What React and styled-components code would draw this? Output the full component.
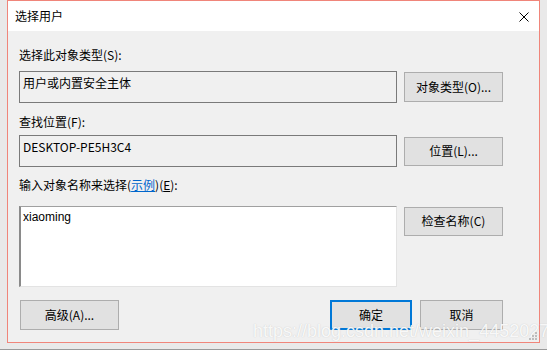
import React from "react";
import styled, { createGlobalStyle } from "styled-components";

const GlobalStyle = createGlobalStyle`
  html, body {
    margin: 0;
    padding: 0;
    background: #e9e9e9;
    overflow: hidden;
  }
  body {
    font-family: "Noto Sans CJK SC", "Noto Sans", sans-serif;
    font-size: 12px;
    color: #000;
  }
`;

export default function App() {
  return (
    <>
      <GlobalStyle />
      <Desktop>
        <Dialog>
          <TitleBar>
            <Title>选择用户</Title>
            <CloseButton aria-label="close">
              <svg width="10" height="10" viewBox="0 0 10 10">
                <path d="M0.5 0.5 L9.5 9.5 M9.5 0.5 L0.5 9.5" stroke="#000" strokeWidth="1" />
              </svg>
            </CloseButton>
          </TitleBar>
          <Body>
            <Label $top={16} $bottom={8}>选择此对象类型(S):</Label>
            <Row>
              <ReadOnlyBox>用户或内置安全主体</ReadOnlyBox>
              <Button $top={1}>对象类型(O)...</Button>
            </Row>

            <Label $top={11} $bottom={5}>查找位置(F):</Label>
            <Row>
              <ReadOnlyBox>DESKTOP-PE5H3C4</ReadOnlyBox>
              <Button $top={2} $height={29}>位置(L)...</Button>
            </Row>

            <Label $top={10} $bottom={13}>
              输入对象名称来选择(<Link>示例</Link>)(<u>E</u>):
            </Label>
            <Row>
              <NameBox>xiaoming</NameBox>
              <Button $top={1} $height={29}>检查名称(C)</Button>
            </Row>

            <Footer>
              <Button $width={99}>高级(A)...</Button>
              <FooterRight>
                <Button $width={82} $primary>确定</Button>
                <Button $width={83}>取消</Button>
              </FooterRight>
            </Footer>
          </Body>
          <Watermark>https://blog.csdn.net/weixin_44520274</Watermark>
          <Grip>
            <svg width="8" height="8" viewBox="0 0 8 8">
              <rect x="6" y="0" width="2" height="2" fill="#bdbdbd" />
              <rect x="3" y="3" width="2" height="2" fill="#bdbdbd" />
              <rect x="6" y="3" width="2" height="2" fill="#bdbdbd" />
              <rect x="0" y="6" width="2" height="2" fill="#bdbdbd" />
              <rect x="3" y="6" width="2" height="2" fill="#bdbdbd" />
              <rect x="6" y="6" width="2" height="2" fill="#bdbdbd" />
            </svg>
          </Grip>
        </Dialog>
      </Desktop>
    </>
  );
}

const Desktop = styled.div`
  width: 547px;
  height: 350px;
  padding-left: 7px;
  box-sizing: border-box;
  background: #e9e9e9;
  border-bottom: 1px solid #9a9a9a;
`;

const Dialog = styled.div`
  position: relative;
  width: 533px;
  height: 343px;
  box-sizing: border-box;
  border: 1px solid #f0857a;
  background: #f0f0f0;
  display: flex;
  flex-direction: column;
`;

const TitleBar = styled.div`
  height: 30px;
  background: #fff;
  display: flex;
  align-items: center;
  justify-content: space-between;
  padding: 0 10px 0 7px;
`;

const Title = styled.div`
  font-size: 12px;
  line-height: 16px;
`;

const CloseButton = styled.div`
  width: 10px;
  height: 10px;
  display: flex;
  margin-top: 1px;
  svg {
    display: block;
  }
`;

const Body = styled.div`
  flex: 1;
  display: flex;
  flex-direction: column;
  padding: 0 36px 0 11px;
`;

const Label = styled.div`
  line-height: 16px;
  margin-top: ${(p) => p.$top}px;
  margin-bottom: ${(p) => p.$bottom}px;
  u {
    text-decoration-thickness: 1px;
  }
`;

const Link = styled.span`
  color: #0066cc;
  text-decoration: underline;
`;

const Row = styled.div`
  display: flex;
  align-items: flex-start;
  gap: 7px;
`;

const ReadOnlyBox = styled.div`
  width: 378px;
  height: 32px;
  box-sizing: border-box;
  border: 1px solid #7a7a7a;
  background: #f0f0f0;
  padding: 3px 3px;
  line-height: 16px;
`;

const NameBox = styled.div`
  width: 378px;
  height: 81px;
  box-sizing: border-box;
  background: #fff;
  border-top: 1px solid #a0a0a0;
  border-left: 2px solid #8a8a8a;
  border-right: 1px solid #e3e3e3;
  border-bottom: 1px solid #e3e3e3;
  padding: 2px 2px;
  font-family: "Liberation Sans", Arial, sans-serif;
  font-size: 12px;
  line-height: 16px;
`;

const Button = styled.div`
  width: ${(p) => p.$width || 99}px;
  height: ${(p) => p.$height || 30}px;
  margin-top: ${(p) => p.$top || 0}px;
  box-sizing: border-box;
  display: flex;
  align-items: center;
  justify-content: center;
  background: #e1e1e1;
  border: ${(p) => (p.$primary ? "2px solid #0078d7" : "1px solid #adadad")};
  line-height: 16px;
  padding-bottom: 1px;
`;

const Footer = styled.div`
  display: flex;
  justify-content: space-between;
  margin-top: 13px;
  padding-left: 1px;
`;

const FooterRight = styled.div`
  display: flex;
  gap: 8px;
`;

const Watermark = styled.div`
  position: absolute;
  left: 245px;
  bottom: 0;
  font-family: "Liberation Sans", Arial, sans-serif;
  font-size: 18px;
  line-height: 22px;
  color: rgba(255, 255, 255, 0.9);
  text-shadow: 0 0 1px rgba(150, 150, 150, 0.5);
  pointer-events: none;
  white-space: nowrap;
`;

const Grip = styled.div`
  position: absolute;
  right: 2px;
  bottom: 2px;
  display: flex;
`;
